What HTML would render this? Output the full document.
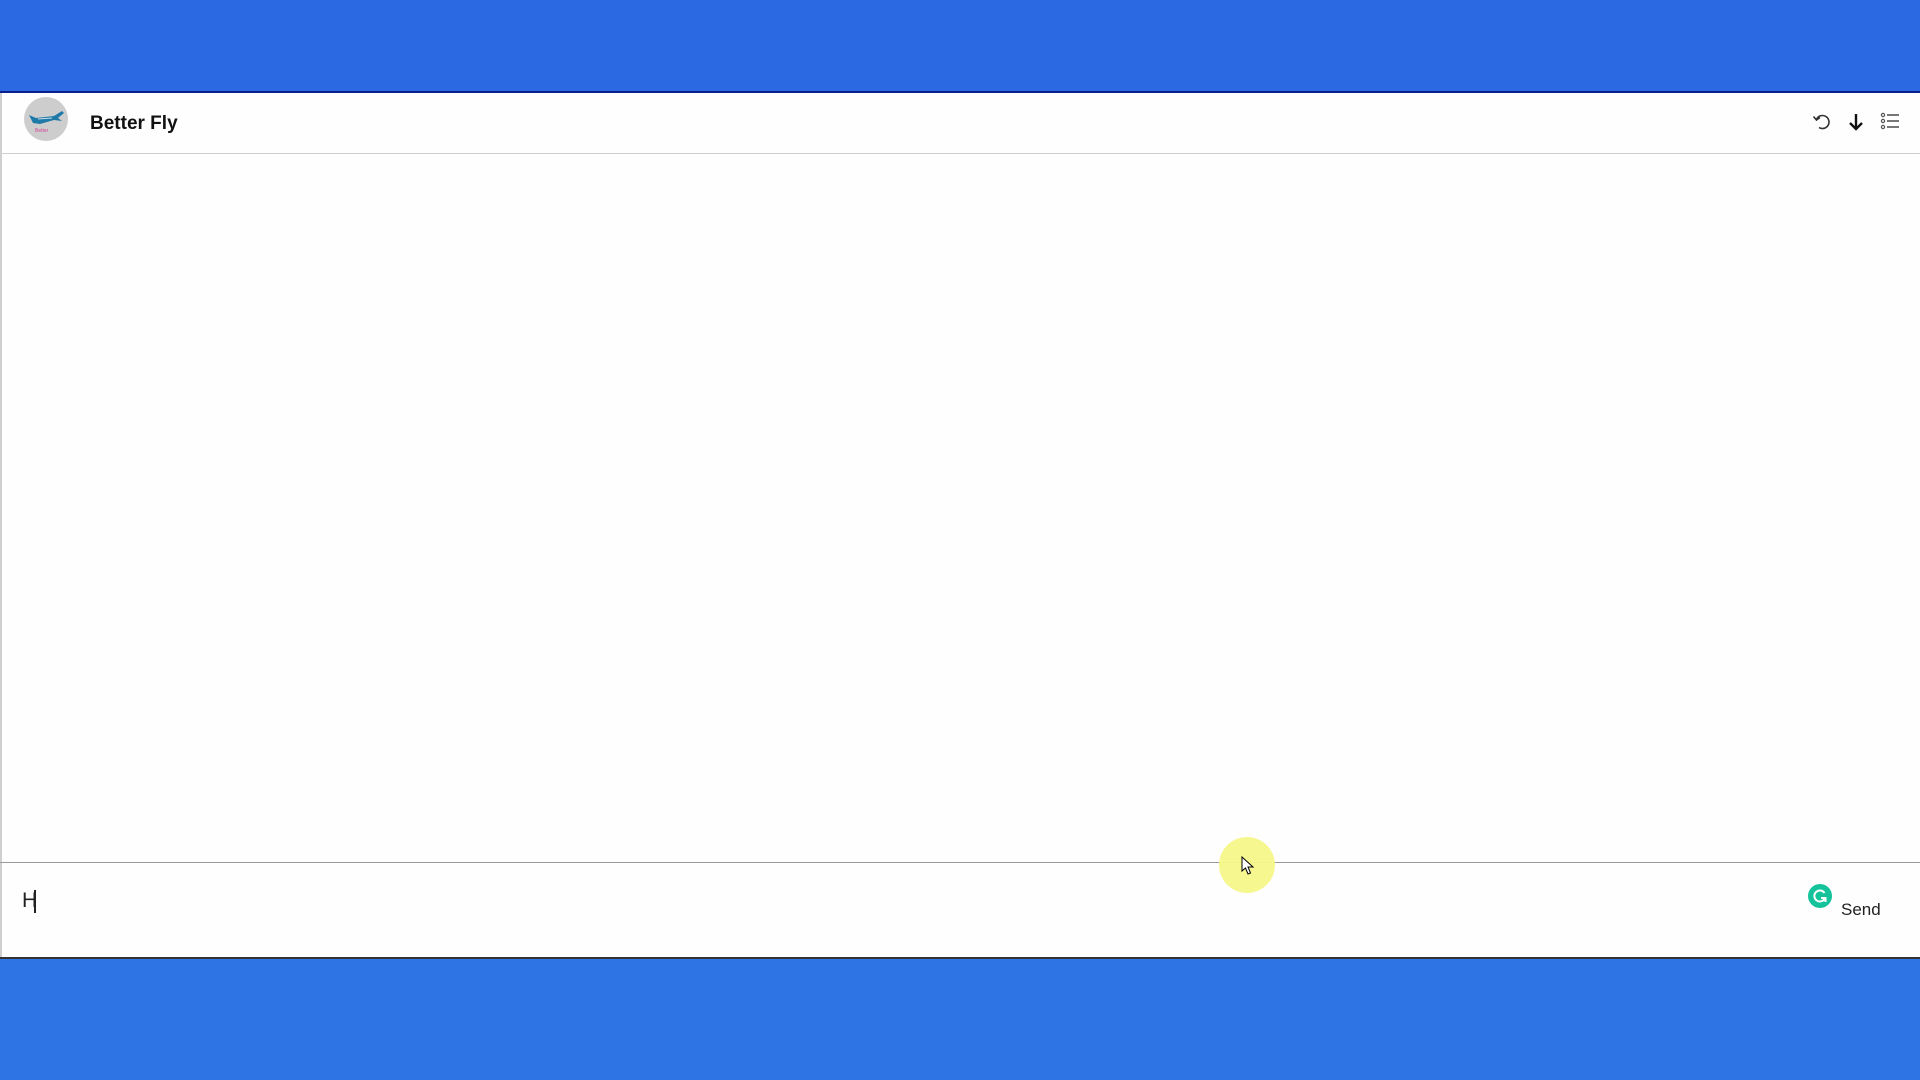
<!DOCTYPE html>
<html><head><meta charset="utf-8"><style>
*{margin:0;padding:0;box-sizing:border-box}
html,body{width:1920px;height:1080px;overflow:hidden;background:#fefefe;font-family:"Liberation Sans",Arial,sans-serif}
.top{position:absolute;left:0;top:0;width:1920px;height:91px;background:#2b69e2}
.topline{position:absolute;left:0;top:91px;width:1920px;height:2px;background:#0a1f8a}
.panel{position:absolute;left:0;top:93px;width:1920px;height:864px;background:#fefefe;border-left:2px solid #cfcfcf}
.hdrline{position:absolute;left:0;top:153px;width:1920px;height:1px;background:#cfcfcf}
.inline{position:absolute;left:0;top:862px;width:1920px;height:1px;background:#9a9a9a}
.botline{position:absolute;left:0;top:957px;width:1920px;height:2px;background:#333}
.bot{position:absolute;left:0;top:959px;width:1920px;height:121px;background:#2f74e4}
.av{position:absolute;left:24px;top:97px;width:44px;height:44px;border-radius:50%;background:#cdcdcd;overflow:hidden}
.title{position:absolute;left:90px;top:113px;font-size:19px;font-weight:bold;color:#111}
.H{position:absolute;left:22px;top:889px;font-size:21px;color:#222}
.caret{position:absolute;left:34px;top:890px;width:2px;height:23px;background:#222}
.send{position:absolute;left:1841px;top:900px;font-size:17px;color:#222}
.g{position:absolute;left:1808px;top:884px;width:24px;height:24px;border-radius:50%;background:#15c39a}
.hl{position:absolute;left:1219px;top:837px;width:56px;height:56px;border-radius:50%;background:#f7f78a;opacity:.95}
</style></head><body>
<div class="top"></div><div class="topline"></div>
<div class="panel"></div>
<div class="hdrline"></div>
<div class="av"><svg width="44" height="44" viewBox="0 0 44 44"><path d="M5 18 L12 21 L30 19 L38 14 L40 16 L34 21 L38 24 L30 23 L16 27 L9 26 Z" fill="#1f7aa8"/><path d="M14 22 L28 21" stroke="#cde" stroke-width="1"/><text x="11" y="35" font-size="5" fill="#d04a9a" font-family="Liberation Sans">Better</text></svg></div>
<div class="title">Better Fly</div>
<svg style="position:absolute;left:1810px;top:110px" width="24" height="24" viewBox="0 0 24 24"><path d="M6.5 9.5 A6.5 6.5 0 1 1 9 17.5" fill="none" stroke="#333" stroke-width="1.6"/><path d="M3.5 6.5 L6.5 10 L10 7.5" fill="none" stroke="#333" stroke-width="1.6"/></svg>
<svg style="position:absolute;left:1844px;top:110px" width="24" height="24" viewBox="0 0 24 24"><path d="M12 4 V19 M6 13 L12 19 L18 13" fill="none" stroke="#111" stroke-width="2.4"/></svg>
<svg style="position:absolute;left:1879px;top:110px" width="24" height="24" viewBox="0 0 24 24"><circle cx="4" cy="5" r="1.6" fill="none" stroke="#555" stroke-width="1.2"/><circle cx="4" cy="11" r="1.6" fill="none" stroke="#555" stroke-width="1.2"/><circle cx="4" cy="17" r="1.6" fill="none" stroke="#555" stroke-width="1.2"/><path d="M8 5H20M8 11H20M8 17H20" stroke="#777" stroke-width="2"/></svg>
<div class="inline"></div>
<div class="hl"></div>
<svg style="position:absolute;left:1241px;top:856px" width="14" height="20" viewBox="0 0 14 20"><path d="M1 1 V15 L4.5 12 L7 18 L9.5 17 L7 11 L12 11 Z" fill="#fff" stroke="#000" stroke-width="1"/></svg>
<div class="H">H</div><div class="caret"></div>
<div class="g"><svg width="24" height="24" viewBox="0 0 24 24"><path d="M16.5 9 A5.5 5.5 0 1 0 17 14" fill="none" stroke="#fff" stroke-width="2"/><path d="M13 14 H17.5 V18" fill="none" stroke="#fff" stroke-width="2"/></svg></div>
<div class="send">Send</div>
<div class="botline"></div><div class="bot"></div>
</body></html>
